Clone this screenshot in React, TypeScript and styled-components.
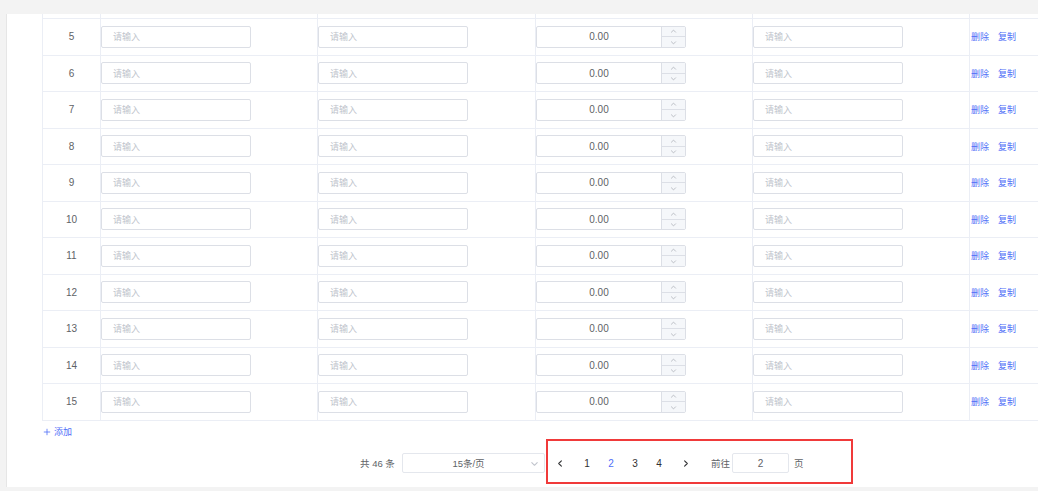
import styled, { createGlobalStyle } from "styled-components";

const GlobalStyle = createGlobalStyle`
    html, body {
        margin: 0;
        padding: 0;
        background: #f3f3f3;
        font-family: "Liberation Sans", "Noto Sans CJK SC", sans-serif;
        overflow: hidden;
    }
`;

const BLUE = "#4f6ef7";
const LINE = "#ebeef5";
const COLUMNS = "58px 217px 218px 217px 217px 1fr";

const Page = styled.div`
    width: 1038px;
    height: 491px;
    padding-top: 14px;
    padding-left: 6px;
    box-sizing: border-box;
`;

const Panel = styled.div`
    height: 473px;
    background: #fff;
    border-left: 1px solid #e6e6e6;
    padding-left: 35px;
    overflow: hidden;
    display: flex;
    flex-direction: column;
`;

const Table = styled.div`
    display: flex;
    flex-direction: column;
    border-left: 1px solid ${LINE};
`;

const Row = styled.div<{ $stub?: boolean }>`
    display: grid;
    grid-template-columns: ${COLUMNS};
    height: ${(p) => (p.$stub ? "4px" : "35.5px")};
    border-bottom: 1px solid ${LINE};
`;

const Cell = styled.div<{ $center?: boolean }>`
    display: flex;
    align-items: center;
    justify-content: ${(p) => (p.$center ? "center" : "flex-start")};
    border-right: 1px solid ${LINE};
    overflow: hidden;
    &:last-child {
        border-right: none;
        padding-left: 1px;
    }
`;

const IndexText = styled.span`
    font-size: 10px;
    color: #606266;
`;

const TextInput = styled.div`
    width: 150px;
    height: 22px;
    box-sizing: border-box;
    border: 1px solid #dcdfe6;
    border-radius: 2px;
    padding-left: 11px;
    display: flex;
    align-items: center;
    font-size: 9px;
    color: #c0c4cc;
`;

const NumberBox = styled.div`
    width: 150px;
    height: 22px;
    box-sizing: border-box;
    border: 1px solid #dcdfe6;
    border-radius: 2px;
    display: flex;
`;

const NumberValue = styled.div`
    flex: 1;
    display: flex;
    align-items: center;
    justify-content: center;
    font-size: 10px;
    color: #606266;
`;

const Stepper = styled.div`
    width: 23px;
    display: flex;
    flex-direction: column;
    border-left: 1px solid #dcdfe6;
    background: #f5f7fa;
`;

const StepButton = styled.div`
    flex: 1;
    display: flex;
    align-items: center;
    justify-content: center;
    & + & {
        border-top: 1px solid #dcdfe6;
    }
`;

const Actions = styled.div`
    display: flex;
    gap: 9px;
    font-size: 9px;
    color: ${BLUE};
`;

const AddRow = styled.div`
    height: 14px;
    margin-top: 4px;
    display: flex;
    align-items: center;
    gap: 3px;
    padding-left: 1px;
    font-size: 9px;
    color: ${BLUE};
`;

const PagerRow = styled.div`
    height: 45px;
    display: flex;
    align-items: center;
    padding-left: 318px;
    color: #606266;
`;

const Total = styled.span`
    width: 42px;
    margin-top: 4px;
    font-size: 9.5px;
`;

const SizeSelect = styled.div`
    width: 143px;
    height: 20px;
    margin-top: 4px;
    margin-right: 1px;
    box-sizing: border-box;
    border: 1px solid #e4e7ed;
    border-radius: 2px;
    display: flex;
    align-items: center;
    color: #606266;
    font-size: 9.5px;
`;

const SelectLabel = styled.span`
    flex: 1;
    text-align: center;
    padding-left: 4px;
`;

const SelectArrow = styled.span`
    width: 14px;
    display: flex;
    align-items: center;
`;

const Highlight = styled.div`
    height: 45px;
    width: 307px;
    box-sizing: border-box;
    border: 2px solid #f03a3a;
    display: flex;
    align-items: center;
    padding-top: 4px;
`;

const PagerButton = styled.span<{ $active?: boolean }>`
    width: 24px;
    text-align: center;
    font-size: 10px;
    color: ${(p) => (p.$active ? BLUE : "#303133")};
    display: flex;
    justify-content: center;
    align-items: center;
`;

const Pages = styled.div`
    display: flex;
    margin-left: 3px;
    margin-right: 2px;
`;

const Jumper = styled.div`
    display: flex;
    align-items: center;
    margin-left: 14px;
    font-size: 9.5px;
    color: #606266;
`;

const JumpInput = styled.div`
    width: 57px;
    height: 20px;
    box-sizing: border-box;
    margin: 0 5px 0 2px;
    border: 1px solid #e4e7ed;
    border-radius: 2px;
    display: flex;
    align-items: center;
    justify-content: center;
    font-size: 10px;
    color: #606266;
`;

function Chevron({ dir, color = "#b0b4bb", size = 8 }: { dir: "up" | "down" | "left" | "right"; color?: string; size?: number }) {
    const paths = {
        up: "M2 6 L5 3 L8 6",
        down: "M2 4 L5 7 L8 4",
        left: "M6 2 L3 5 L6 8",
        right: "M4 2 L7 5 L4 8"
    };
    return (
        <svg width={size} height={size} viewBox="0 0 10 10">
            <path d={paths[dir]} fill="none" stroke={color} strokeWidth="1.2" strokeLinecap="round" strokeLinejoin="round" />
        </svg>
    );
}

const rows = [5, 6, 7, 8, 9, 10, 11, 12, 13, 14, 15];

export default function App() {
    return (
        <Page>
            <GlobalStyle />
            <Panel>
                <Table>
                    <Row $stub>
                        <Cell />
                        <Cell />
                        <Cell />
                        <Cell />
                        <Cell />
                        <Cell />
                    </Row>
                    {rows.map((n) => (
                        <Row key={n}>
                            <Cell $center>
                                <IndexText>{n}</IndexText>
                            </Cell>
                            <Cell>
                                <TextInput>请输入</TextInput>
                            </Cell>
                            <Cell>
                                <TextInput>请输入</TextInput>
                            </Cell>
                            <Cell>
                                <NumberBox>
                                    <NumberValue>0.00</NumberValue>
                                    <Stepper>
                                        <StepButton>
                                            <Chevron dir="up" size={7} />
                                        </StepButton>
                                        <StepButton>
                                            <Chevron dir="down" size={7} />
                                        </StepButton>
                                    </Stepper>
                                </NumberBox>
                            </Cell>
                            <Cell>
                                <TextInput>请输入</TextInput>
                            </Cell>
                            <Cell>
                                <Actions>
                                    <span>删除</span>
                                    <span>复制</span>
                                </Actions>
                            </Cell>
                        </Row>
                    ))}
                </Table>
                <AddRow>
                    <svg width="8" height="8" viewBox="0 0 10 10">
                        <path d="M5 1 V9 M1 5 H9" stroke={BLUE} strokeWidth="1" />
                    </svg>
                    <span>添加</span>
                </AddRow>
                <PagerRow>
                    <Total>共 46 条</Total>
                    <SizeSelect>
                        <SelectLabel>15条/页</SelectLabel>
                        <SelectArrow>
                            <Chevron dir="down" color="#c0c4cc" size={9} />
                        </SelectArrow>
                    </SizeSelect>
                    <Highlight>
                        <PagerButton>
                            <Chevron dir="left" color="#303133" size={9} />
                        </PagerButton>
                        <Pages>
                            <PagerButton>1</PagerButton>
                            <PagerButton $active>2</PagerButton>
                            <PagerButton>3</PagerButton>
                            <PagerButton>4</PagerButton>
                        </Pages>
                        <PagerButton>
                            <Chevron dir="right" color="#303133" size={9} />
                        </PagerButton>
                        <Jumper>
                            <span>前往</span>
                            <JumpInput>2</JumpInput>
                            <span>页</span>
                        </Jumper>
                    </Highlight>
                </PagerRow>
            </Panel>
        </Page>
    );
}
